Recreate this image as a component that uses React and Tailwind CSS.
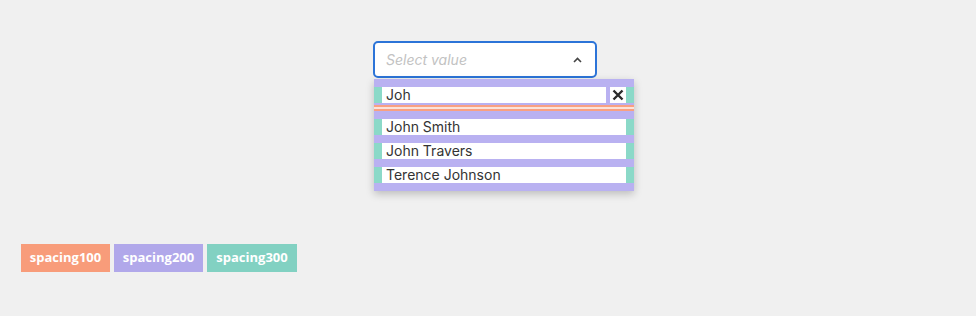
import React from "react";

const options = ["John Smith", "John Travers", "Terence Johnson"];

const tags = [
  { label: "spacing100", color: "bg-[#f89c7a]", w: "w-[89px]" },
  { label: "spacing200", color: "bg-[#b1a8ea]", w: "w-[89px]" },
  { label: "spacing300", color: "bg-[#82d1c2]", w: "w-[90px]" },
];

export default function App() {
  return (
    <div className="min-h-[316px] bg-[#f0f0f0] pt-[41px] font-['Inter',sans-serif]">
      <div className="pl-[373px]">
        <div className="relative w-[224px]">
          <div className="flex h-[37px] items-center justify-between rounded-[5px] border-2 border-[#2c74d8] bg-white pl-[11px] pr-[13px]">
            <span className="text-[14px] italic text-[#c2c2c2]">Select value</span>
            <svg width="9" height="6" viewBox="0 0 9 6" className="mt-[1px]">
              <path d="M1 5 L4.5 1.5 L8 5" fill="none" stroke="#444" strokeWidth="1.6" />
            </svg>
          </div>

          <div className="absolute left-[1px] top-[38px] z-10 w-[260px] bg-[#b9b1f1] pb-2 pt-2 shadow-[0_3px_8px_rgba(0,0,0,0.22)]">
            <div className="flex h-[16px] gap-1 border-x-8 border-[#8bd9c8]">
              <div className="flex flex-1 items-center bg-white pl-1 text-[14px] leading-4 text-[#333]">
                Joh
              </div>
              <div className="flex w-4 items-center justify-center bg-white">
                <svg width="12" height="12" viewBox="0 0 12 12">
                  <path d="M1.5 1.5 L10.5 10.5 M10.5 1.5 L1.5 10.5" stroke="#2b2b2b" strokeWidth="2.4" />
                </svg>
              </div>
            </div>

            <div className="mt-[2px] h-[6px] border-y-2 border-[#f9a081] bg-[#fbe3da]" />

            <div className="mt-2 flex flex-col gap-2">
              {options.map((o) => (
                <div
                  key={o}
                  className="flex h-4 items-center border-x-8 border-[#8bd9c8] bg-white pl-1 text-[14px] leading-4 text-[#333]"
                >
                  {o}
                </div>
              ))}
            </div>
          </div>
        </div>
      </div>

      <div className="mt-[166px] flex gap-1 pl-[21px] font-['Open_Sans',sans-serif]">
        {tags.map((t) => (
          <div
            key={t.label}
            className={`${t.color} ${t.w} flex h-[28px] items-center justify-center text-[13px] font-bold text-white`}
          >
            {t.label}
          </div>
        ))}
      </div>
    </div>
  );
}
